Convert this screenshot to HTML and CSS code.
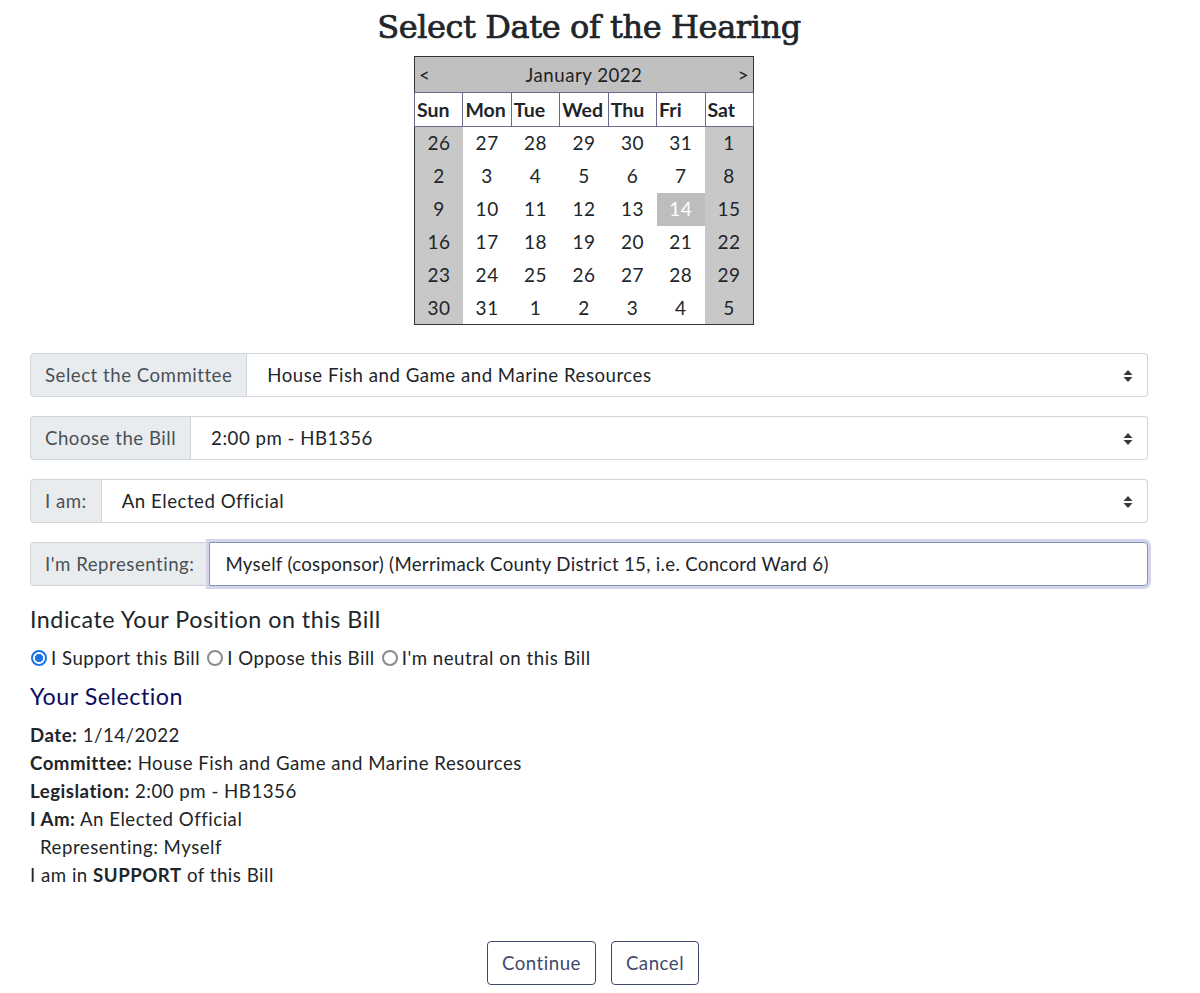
FILE: index.html
```html
<!DOCTYPE html>
<html lang="en">
<head>
<meta charset="utf-8">
<title>Select Date of the Hearing</title>
<link rel="stylesheet" href="styles.css">
</head>
<body>
<div class="page">
  <h1 class="title">Select Date of the Hearing</h1>
  <div class="cal-wrap">
    <table class="cal">
      <thead>
        <tr class="month-row">
          <th colspan="7">
            <div class="month-bar"><span>&lt;</span><span>January 2022</span><span>&gt;</span></div>
          </th>
        </tr>
        <tr class="dow-row">
          <th>Sun</th><th>Mon</th><th>Tue</th><th>Wed</th><th>Thu</th><th>Fri</th><th>Sat</th>
        </tr>
      </thead>
      <tbody>
        <tr><td class="we">26</td><td>27</td><td>28</td><td>29</td><td>30</td><td>31</td><td class="we">1</td></tr>
        <tr><td class="we">2</td><td>3</td><td>4</td><td>5</td><td>6</td><td>7</td><td class="we">8</td></tr>
        <tr><td class="we">9</td><td>10</td><td>11</td><td>12</td><td>13</td><td class="sel">14</td><td class="we">15</td></tr>
        <tr><td class="we">16</td><td>17</td><td>18</td><td>19</td><td>20</td><td>21</td><td class="we">22</td></tr>
        <tr><td class="we">23</td><td>24</td><td>25</td><td>26</td><td>27</td><td>28</td><td class="we">29</td></tr>
        <tr><td class="we">30</td><td>31</td><td>1</td><td>2</td><td>3</td><td>4</td><td class="we">5</td></tr>
      </tbody>
    </table>
  </div>

  <div class="group">
    <div class="addon">Select the Committee</div>
    <div class="field select">House Fish and Game and Marine Resources<span class="caret"><svg width="10" height="14" viewBox="0 0 10 14"><path d="M5 1 L9.5 6 H0.5 Z M0.5 8 H9.5 L5 13 Z" fill="#343a40"/></svg></span></div>
  </div>
  <div class="group">
    <div class="addon">Choose the Bill</div>
    <div class="field select">2:00 pm - HB1356<span class="caret"><svg width="10" height="14" viewBox="0 0 10 14"><path d="M5 1 L9.5 6 H0.5 Z M0.5 8 H9.5 L5 13 Z" fill="#343a40"/></svg></span></div>
  </div>
  <div class="group">
    <div class="addon">I am:</div>
    <div class="field select">An Elected Official<span class="caret"><svg width="10" height="14" viewBox="0 0 10 14"><path d="M5 1 L9.5 6 H0.5 Z M0.5 8 H9.5 L5 13 Z" fill="#343a40"/></svg></span></div>
  </div>
  <div class="group">
    <div class="addon">I'm Representing:</div>
    <div class="field input focus">Myself (cosponsor) (Merrimack County District 15, i.e. Concord Ward 6)</div>
  </div>

  <h5 class="h5">Indicate Your Position on this Bill</h5>
  <div class="radios">
    <label class="radio"><span class="dot on"></span>I Support this Bill</label>
    <label class="radio"><span class="dot"></span>I Oppose this Bill</label>
    <label class="radio"><span class="dot"></span>I'm neutral on this Bill</label>
  </div>

  <h5 class="h5 sel-title">Your Selection</h5>
  <div class="summary">
    <div><b>Date:</b> 1/14/2022</div>
    <div><b>Committee:</b> House Fish and Game and Marine Resources</div>
    <div><b>Legislation:</b> 2:00 pm - HB1356</div>
    <div><b>I Am:</b> An Elected Official</div>
    <div class="indent">Representing: Myself</div>
    <div>I am in <b>SUPPORT</b> of this Bill</div>
  </div>

  <div class="buttons">
    <button class="btn">Continue</button>
    <button class="btn">Cancel</button>
  </div>
</div>
</body>
</html>
```

FILE: styles.css
```css
* { box-sizing: border-box; }
html, body { margin: 0; padding: 0; background: #fff; }
body {
  font-family: Lato, "Noto Sans", sans-serif;
  font-size: 18.67px;
  line-height: 28px;
  letter-spacing: 0.5px;
  color: #212529;
}
.page {
  width: 1118px;
  margin-left: 30px;
  padding-top: 5px;
}
.title {
  font-family: "DejaVu Serif", serif;
  font-weight: 400;
  font-size: 32px;
  line-height: 44px;
  letter-spacing: -0.4px;
  -webkit-text-stroke: 0.7px #212529;
  margin: 0 0 7px 0;
  text-align: center;
  color: #212529;
}
.cal-wrap { display: flex; justify-content: center; padding-right: 10px; }
.cal {
  border-collapse: collapse;
  border: 1px solid #333;
  width: 340px;
  table-layout: fixed;
  letter-spacing: 0;
}
.month-row th {
  background: #c0c0c0;
  height: 36px;
  padding: 0;
  font-weight: 400;
}
.month-bar {
  display: flex;
  justify-content: space-between;
  align-items: center;
  padding: 0 4px 0 4px;
  color: #222;
  letter-spacing: 0.5px;
}
.dow-row th {
  border: 1px solid #6a6a8e;
  background: #fff;
  height: 34px;
  padding: 0 2px;
  text-align: left;
  font-weight: 700;
  font-size: 19.5px;
}
.cal td {
  height: 33px;
  padding: 0;
  text-align: center;
  background: #fff;
  letter-spacing: 0.5px;
  font-size: 19px;
}
.cal td.we { background: #c8c8c8; }
.cal td.sel { background: #bdbdbd; color: #fff; }

.group {
  display: flex;
  height: 44px;
  margin-bottom: 19px;
}
.cal-wrap + .group { margin-top: 28px; }
.addon {
  display: flex;
  align-items: center;
  padding: 0 14px;
  background: #e9ecef;
  border: 1px solid #ced4da;
  border-radius: 4px 0 0 4px;
  color: #495057;
  white-space: nowrap;
}
.field {
  flex: 1;
  display: flex;
  align-items: center;
  border: 1px solid #ced4da;
  border-left: 0;
  border-radius: 0 4px 4px 0;
  color: #212529;
  position: relative;
  background: #fff;
}
.field.select { padding-left: 20px; }
.field.input { padding-left: 15px; letter-spacing: 0.3px; }
.field.focus {
  border: 1px solid #8c91b8;
  box-shadow: 0 0 0 3px #d3d6ea;
}
.caret {
  position: absolute;
  right: 14px;
  top: 15px;
  display: flex;
}
.h5 {
  font-size: 23.3px;
  font-weight: 400;
  line-height: 28px;
  margin: 0 0 11px 0;
}
.group + .h5 { margin-top: 1px; }
.radios { display: flex; gap: 6px; margin-bottom: 10px; }
.radio { display: flex; align-items: center; gap: 4px; }
.dot {
  width: 16px;
  height: 16px;
  border-radius: 50%;
  border: 2px solid #8a8a8a;
  display: inline-block;
  background: #fff;
  margin-left: 1px;
}
.dot.on {
  border-color: #1a73e8;
  background: radial-gradient(circle, #1a73e8 0 3.8px, #fff 4.4px);
}
.sel-title { color: #0d0d5e; margin-bottom: 11px; }
.summary b { font-weight: 700; }
.indent { padding-left: 10px; }
.buttons {
  display: flex;
  justify-content: center;
  gap: 15px;
  margin-top: 52px;
  padding-left: 8px;
}
.btn {
  font-family: inherit;
  font-size: 18.67px;
  line-height: 28px;
  letter-spacing: 0.5px;
  padding: 7px 14px;
  background: #fff;
  border: 1px solid #3d4a6b;
  border-radius: 4px;
  color: #3d4a6b;
}
```
